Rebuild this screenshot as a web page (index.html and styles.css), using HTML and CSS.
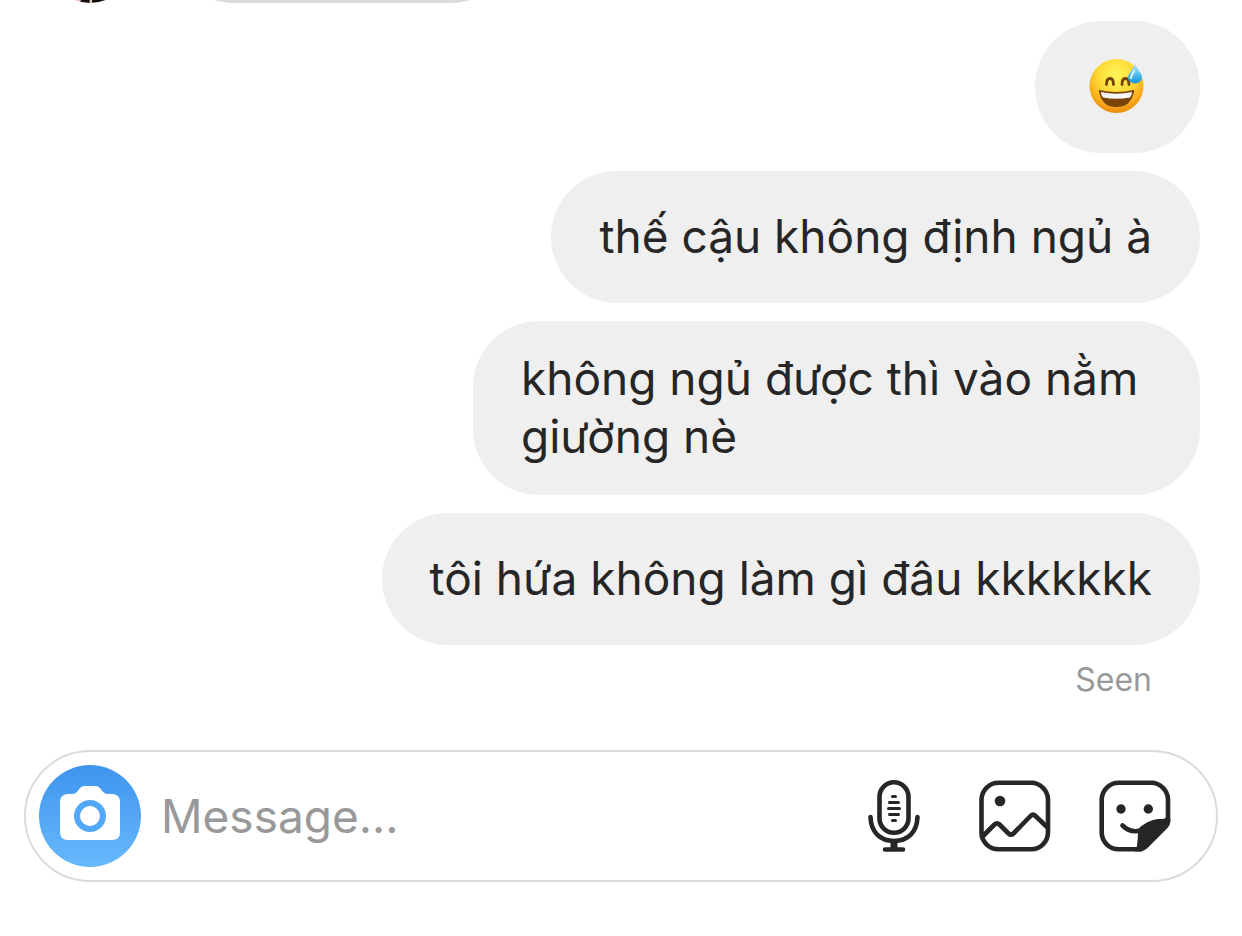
FILE: index.html
```html
<!DOCTYPE html>
<html lang="vi">
<head>
    <meta charset="UTF-8">
    <meta name="viewport" content="width=device-width, initial-scale=1.0">
    <title>Direct</title>
    <link rel="stylesheet" href="styles.css">
</head>
<body>

    <main class="thread">
        <!-- Last received message, scrolled out of view -->
        <div class="received">
            <div class="avatar"></div>
            <div class="received-bubble"></div>
        </div>

        <!-- Sent messages -->
        <div class="sent">
            <div class="bubble">
                <svg class="emoji" viewBox="0 0 56 56" role="img" aria-label="😅">
                    <defs>
                        <radialGradient id="face" cx="0.5" cy="0.3" r="0.7">
                            <stop offset="0" stop-color="#fff65c"/>
                            <stop offset="0.5" stop-color="#fdd835"/>
                            <stop offset="0.8" stop-color="#f9ab1c"/>
                            <stop offset="1" stop-color="#ea8a0c"/>
                        </radialGradient>
                        <linearGradient id="drop" x1="0" y1="0" x2="0" y2="1">
                            <stop offset="0" stop-color="#c5ebfb"/>
                            <stop offset="0.5" stop-color="#5bc3f4"/>
                            <stop offset="1" stop-color="#1594dc"/>
                        </linearGradient>
                    </defs>
                    <circle cx="28" cy="28" r="27" fill="url(#face)"/>
                    <path d="M18 26.500C18 18.500 25 18.500 25 26.500M33.500 26.500C33.500 18.500 40.500 18.500 40.500 26.500" fill="none" stroke="#754107" stroke-width="2.800" stroke-linecap="round"/>
                    <path d="M11 32Q28 36 45 32Q46 32 45.500 34C43 45 37 49 28 49S13 45 10.500 34Q10 32 11 32Z" fill="#7a4307"/>
                    <path d="M12.500 34Q28 37.500 43.500 34Q43.500 38 41.500 39.500Q28 42 14.500 39.500Q12.500 38 12.500 34Z" fill="#f6f6f6"/>
                    <path d="M46.500 5C44.500 12 39.500 15 39.500 19.500A7 6 0 0 0 53.500 19.500C53.500 15 48.500 12 46.500 5Z" fill="url(#drop)"/>
                    <path d="M45.500 13C44.500 15.500 42.500 17.500 42.500 20" fill="none" stroke="#e8f8ff" stroke-width="2" stroke-linecap="round"/>
                </svg>
            </div>
            <div class="bubble">thế cậu không định ngủ à</div>
            <div class="bubble">không ngủ được thì vào nằm giường nè</div>
            <div class="bubble bubble-wide">tôi hứa không làm gì đâu kkkkkkk</div>
            <p class="status">Seen</p>
        </div>
    </main>

    <!-- Message composer -->
    <form class="composer">
        <button type="button" class="camera" aria-label="Camera">
            <svg viewBox="0 0 102 102">
                <path d="M28 29H33C40 29 39 21 46 21H56C63 21 62 29 69 29H74Q81 30 81 37V67Q81 75 73 75H29Q21 75 21 67V37Q21 30 28 29Z" fill="#fff"/>
                <circle cx="51" cy="51" r="13" fill="none" stroke="#52a8f8" stroke-width="6"/>
            </svg>
        </button>
        <input type="text" class="message" placeholder="Message..." aria-label="Message">
        <button type="button" class="tool" aria-label="Voice message">
            <svg viewBox="0 0 72 72">
                <rect x="21.500" y="2.300" width="29" height="50.500" rx="14.500"/>
                <path d="M12.500 37C13 52 22 61 36 61S59 52 59.500 37"/>
                <path d="M36 61V69" stroke-width="7" stroke-linecap="butt"/>
                <path d="M27 69.500H45"/>
                <path class="thin" d="M34.500 16.500H37.500M31.500 22.500H40.500M30.500 28.500H41.500M31.500 34.500H40.500M34.500 40.500H37.500"/>
            </svg>
        </button>
        <button type="button" class="tool" aria-label="Photo">
            <svg viewBox="0 0 72 72">
                <rect x="3.500" y="2.800" width="66.500" height="66.500" rx="17"/>
                <path d="M4 57L16.500 44.500Q19 42 21.500 44.500L30.500 53.500Q33 56 35.500 53.500L52.500 36Q55 33.500 57.500 36L69 47"/>
                <circle class="solid" cx="22" cy="21" r="5.300"/>
            </svg>
        </button>
        <button type="button" class="tool" aria-label="Stickers">
            <svg viewBox="0 0 72 72">
                <path d="M43 69.300H20.700A17 17 0 0 1 3.700 52.300V19.800A17 17 0 0 1 20.700 2.800H53A17 17 0 0 1 70 19.800V41"/>
                <path class="solid" d="M37 71.500C39.500 67 39.500 62 40 53L42 47C50 41 57 38.500 64 39Q68 39 69 36L72.300 39V42Q72.300 45 69.500 48L49 68.500Q45.500 71.600 40 71.600Z"/>
                <path d="M24.500 45.500Q33 54 44 50"/>
                <circle class="solid" cx="23" cy="29" r="4.700"/>
                <circle class="solid" cx="50.300" cy="29" r="4.700"/>
            </svg>
        </button>
    </form>

</body>
</html>
```
FILE: styles.css
```css
* {
    box-sizing: border-box;
}

body {
    margin: 0;
    background-color: #fff;
    color: #262626;
    font-family: Inter, "Noto Sans", sans-serif;
}

.thread {
    display: flex;
    flex-direction: column;
    gap: 18px;
}

/* Only the lower edge of the received message is visible */
.received {
    display: flex;
    align-items: flex-end;
    gap: 36px;
    height: 3px;
    padding-left: 48px;
    overflow: hidden;
}

.avatar {
    flex: none;
    width: 84px;
    height: 84px;
    border-radius: 50%;
    background: linear-gradient(90deg, #e8b9b4 38%, #140a0c 40%, #140a0c 49%, #f0c9c0 50%, #f0c9c0 52%, #140a0c 53%);
}

.received-bubble {
    flex: none;
    width: 348px;
    height: 132px;
    border-radius: 66px;
    background-color: #dbdbdb;
}

.sent {
    display: flex;
    flex-direction: column;
    align-items: flex-end;
    gap: 18px;
    padding: 0 42px;
}

.bubble {
    display: flex;
    align-items: center;
    min-height: 132px;
    max-width: 727px;
    padding: 28px 48px 30px;
    border-radius: 66px;
    background-color: #efefef;
    font-size: 46px;
    line-height: 58px;
}

.bubble-wide {
    max-width: 100%;
}

.emoji {
    width: 67px;
    height: 56px;
    margin-right: 2px;
}

.status {
    margin: 0;
    padding-right: 48px;
    color: #999;
    font-size: 32px;
    line-height: 34px;
}

/* Composer bar */
.composer {
    display: flex;
    align-items: center;
    gap: 48px;
    height: 132px;
    margin: 53px 24px;
    padding: 0 46px 0 13px;
    border: 2px solid #dbdbdb;
    border-radius: 66px;
}

button {
    flex: none;
    padding: 0;
    border: none;
    background: none;
    cursor: pointer;
}

svg {
    display: block;
    overflow: visible;
}

.camera {
    width: 102px;
    height: 102px;
    border-radius: 50%;
    background: linear-gradient(#3f94ee, #68b9fc);
}

.message {
    flex: 1;
    min-width: 0;
    margin-left: -28px;
    padding: 0;
    border: none;
    outline: none;
    background: none;
    color: #262626;
    font-family: inherit;
    font-size: 46px;
}

.message::placeholder {
    color: #999;
}

.tool {
    width: 72px;
    height: 72px;
}

.tool svg {
    fill: none;
    stroke: #262626;
    stroke-width: 4.6;
    stroke-linecap: round;
    stroke-linejoin: round;
}

.tool .thin {
    stroke-width: 3;
}

.tool .solid {
    fill: #262626;
    stroke: none;
}
```
